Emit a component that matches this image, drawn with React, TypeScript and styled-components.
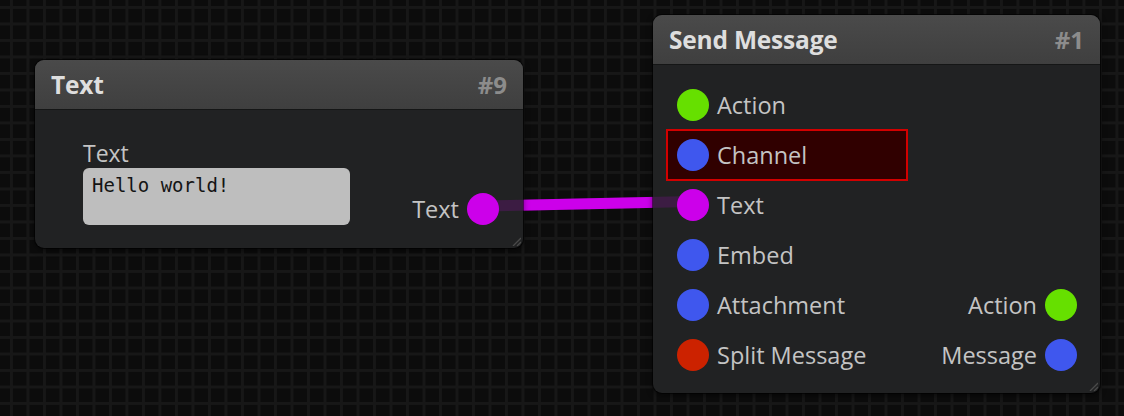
import { createGlobalStyle } from 'styled-components';
import styled from 'styled-components';

const Color = {
  GRID_BG: '#0c0c0c',
  GRID_LINE: '#171717',
  HEADER_TOP: '#4a4a4a',
  HEADER_BOTTOM: '#3f3f3f',
  BODY: '#212223',
  TITLE: '#dedede',
  INDEX: '#8c8c8c',
  LABEL: '#c4c4c4',
  ACTION: '#66e000',
  OBJECT: '#3f57ee',
  STRING: '#cc00ea',
  BOOL: '#cc2200',
};

const GlobalStyle = createGlobalStyle`
  html, body {
    margin: 0;
    padding: 0;
    background: ${Color.GRID_BG};
    overflow: hidden;
  }
`;

const Canvas = styled.div`
  position: relative;
  width: 1124px;
  height: 416px;
  overflow: hidden;
  font-family: 'Open Sans', 'Noto Sans', sans-serif;
  background-color: ${Color.GRID_BG};
  background-image: linear-gradient(to right, ${Color.GRID_LINE} 2.5px, transparent 2.5px),
    linear-gradient(to bottom, ${Color.GRID_LINE} 2.5px, transparent 2.5px);
  background-size: 16.5px 16.5px;
  background-position: 10px 6px;
`;

const LinkLayer = styled.svg<{ $over?: boolean }>`
  position: absolute;
  left: 0;
  top: 0;
  width: 1124px;
  height: 416px;
  pointer-events: none;
  z-index: ${(p) => (p.$over ? 2 : 'auto')};
`;

const Node = styled.div<{ $x: number; $y: number; $w: number }>`
  position: absolute;
  left: ${(p) => p.$x}px;
  top: ${(p) => p.$y}px;
  width: ${(p) => p.$w}px;
  display: flex;
  flex-direction: column;
  background: ${Color.BODY};
  border-radius: 9px;
  box-shadow: 0 0 0 1px rgba(0, 0, 0, 0.6), 0 2px 6px rgba(0, 0, 0, 0.6);
  overflow: hidden;
`;

const Header = styled.div`
  display: flex;
  align-items: center;
  justify-content: space-between;
  height: 49px;
  padding: 0 16px 0 16px;
  background: linear-gradient(to bottom, ${Color.HEADER_TOP}, ${Color.HEADER_BOTTOM});
  box-shadow: 0 1px 0 rgba(0, 0, 0, 0.35);
`;

const Title = styled.div`
  font-size: 24.5px;
  font-weight: 700;
  color: ${Color.TITLE};
  letter-spacing: -0.2px;
`;

const Index = styled.div`
  font-size: 24px;
  font-weight: 700;
  color: ${Color.INDEX};
`;

const Resize = styled.svg`
  position: absolute;
  right: 2px;
  bottom: 2px;
  width: 9px;
  height: 9px;
`;

const TextBody = styled.div`
  display: flex;
  align-items: flex-end;
  justify-content: space-between;
  height: 139px;
  padding: 0 24px 23px 48px;
  box-sizing: border-box;
`;

const Field = styled.div`
  display: flex;
  flex-direction: column;
`;

const FieldLabel = styled.div`
  font-size: 23px;
  line-height: 26px;
  color: ${Color.LABEL};
  margin-bottom: 2px;
`;

const TextArea = styled.div`
  width: 267px;
  height: 57px;
  box-sizing: border-box;
  padding: 6px 9px;
  background: #bebebe;
  border-radius: 6px;
  font-family: 'DejaVu Sans Mono', 'Liberation Mono', monospace;
  font-size: 19px;
  line-height: 22px;
  color: #141414;
`;

const MessageBody = styled.div`
  display: flex;
  flex-direction: column;
  padding: 16px 0 13px 0;
`;

const Row = styled.div`
  display: flex;
  align-items: center;
  justify-content: space-between;
  height: 50px;
`;

const Input = styled.div<{ $error?: boolean }>`
  display: flex;
  align-items: center;
  gap: 8px;
  width: 240px;
  height: 50px;
  box-sizing: border-box;
  margin-left: 14px;
  padding-left: 10px;
  background: ${(p) => (p.$error ? '#300000' : 'transparent')};
  outline: ${(p) => (p.$error ? '2px solid #d20000' : 'none')};
  outline-offset: -1px;
`;

const Output = styled.div`
  display: flex;
  align-items: center;
  gap: 8px;
  padding-right: 23px;
`;

const Label = styled.span`
  font-size: 23.5px;
  color: ${Color.LABEL};
`;

const Dot = styled.span<{ $color: string }>`
  position: relative;
  z-index: 3;
  width: 32px;
  height: 32px;
  border-radius: 50%;
  background: ${(p) => p.$color};
  flex-shrink: 0;
`;

const ResizeHandle = () => (
  <Resize viewBox="0 0 9 9">
    <line x1="1" y1="9" x2="9" y2="1" stroke="#4a4a4a" strokeWidth="1.3" />
    <line x1="5" y1="9" x2="9" y2="5" stroke="#4a4a4a" strokeWidth="1.3" />
  </Resize>
);

interface Slot {
  label: string;
  color: string;
  error?: boolean;
}

const inputs: Slot[] = [
  { label: 'Action', color: Color.ACTION },
  { label: 'Channel', color: Color.OBJECT, error: true },
  { label: 'Text', color: Color.STRING },
  { label: 'Embed', color: Color.OBJECT },
  { label: 'Attachment', color: Color.OBJECT },
  { label: 'Split Message', color: Color.BOOL },
];

const outputs: (Slot | null)[] = [
  null,
  null,
  null,
  null,
  { label: 'Action', color: Color.ACTION },
  { label: 'Message', color: Color.OBJECT },
];

export default function App() {
  return (
    <Canvas>
      <GlobalStyle />
      <LinkLayer>
        <line x1="482" y1="206" x2="693" y2="201.6" stroke={Color.STRING} strokeWidth="11" />
      </LinkLayer>

      <Node $x={35} $y={60} $w={488}>
        <Header>
          <Title>Text</Title>
          <Index>#9</Index>
        </Header>
        <TextBody>
          <Field>
            <FieldLabel>Text</FieldLabel>
            <TextArea>Hello world!</TextArea>
          </Field>
          <Output style={{ paddingRight: 0 }}>
            <Label>Text</Label>
            <Dot $color={Color.STRING} />
          </Output>
        </TextBody>
        <ResizeHandle />
      </Node>

      <Node $x={653} $y={15} $w={447}>
        <Header>
          <Title>Send Message</Title>
          <Index>#1</Index>
        </Header>
        <MessageBody>
          {inputs.map((slot, i) => {
            const out = outputs[i];
            return (
              <Row key={slot.label}>
                <Input $error={slot.error}>
                  <Dot $color={slot.color} />
                  <Label>{slot.label}</Label>
                </Input>
                {out && (
                  <Output>
                    <Label>{out.label}</Label>
                    <Dot $color={out.color} />
                  </Output>
                )}
              </Row>
            );
          })}
        </MessageBody>
        <ResizeHandle />
      </Node>

      <LinkLayer $over>
        <line x1="482" y1="206" x2="693" y2="201.6" stroke="rgba(204,0,234,0.16)" strokeWidth="11" />
      </LinkLayer>
    </Canvas>
  );
}
